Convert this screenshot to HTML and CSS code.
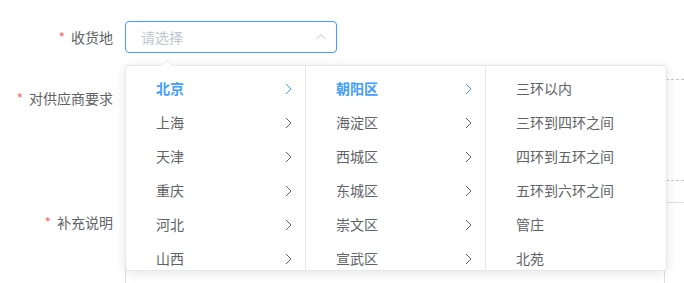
FILE: index.html
```html
<!DOCTYPE html>
<html lang="zh-CN">
<head>
	<meta charset="UTF-8">
	<title>收货地</title>
	<link rel="stylesheet" href="styles.css">
</head>
<body>
	<form class="form">
		<!-- 收货地 -->
		<div class="form-item item-addr">
			<label class="label"><span class="star">*</span>收货地</label>
			<div class="content">
				<div class="cascader">
					<div class="input">
						<span class="placeholder">请选择</span>
						<svg class="caret" width="12" height="12" viewBox="0 0 12 12"><path d="M1.5 8 L6 3.8 L10.5 8" fill="none" stroke="#c0c4cc" stroke-width="1"/></svg>
					</div>

					<!-- 下拉面板 -->
					<div class="dropdown">
						<span class="pointer"></span>
						<div class="panel">
							<ul class="menu">
								<li class="node active">北京<svg class="arrow" viewBox="0 0 7 12"><path d="M1 1 L6 6 L1 11"/></svg></li>
								<li class="node">上海<svg class="arrow" viewBox="0 0 7 12"><path d="M1 1 L6 6 L1 11"/></svg></li>
								<li class="node">天津<svg class="arrow" viewBox="0 0 7 12"><path d="M1 1 L6 6 L1 11"/></svg></li>
								<li class="node">重庆<svg class="arrow" viewBox="0 0 7 12"><path d="M1 1 L6 6 L1 11"/></svg></li>
								<li class="node">河北<svg class="arrow" viewBox="0 0 7 12"><path d="M1 1 L6 6 L1 11"/></svg></li>
								<li class="node">山西<svg class="arrow" viewBox="0 0 7 12"><path d="M1 1 L6 6 L1 11"/></svg></li>
							</ul>
							<ul class="menu">
								<li class="node active">朝阳区<svg class="arrow" viewBox="0 0 7 12"><path d="M1 1 L6 6 L1 11"/></svg></li>
								<li class="node">海淀区<svg class="arrow" viewBox="0 0 7 12"><path d="M1 1 L6 6 L1 11"/></svg></li>
								<li class="node">西城区<svg class="arrow" viewBox="0 0 7 12"><path d="M1 1 L6 6 L1 11"/></svg></li>
								<li class="node">东城区<svg class="arrow" viewBox="0 0 7 12"><path d="M1 1 L6 6 L1 11"/></svg></li>
								<li class="node">崇文区<svg class="arrow" viewBox="0 0 7 12"><path d="M1 1 L6 6 L1 11"/></svg></li>
								<li class="node">宣武区<svg class="arrow" viewBox="0 0 7 12"><path d="M1 1 L6 6 L1 11"/></svg></li>
							</ul>
							<ul class="menu">
								<li class="node">三环以内</li>
								<li class="node">三环到四环之间</li>
								<li class="node">四环到五环之间</li>
								<li class="node">五环到六环之间</li>
								<li class="node">管庄</li>
								<li class="node">北苑</li>
							</ul>
						</div>
					</div>
				</div>
			</div>
		</div>

		<!-- 对供应商要求 -->
		<div class="form-item item-req">
			<label class="label"><span class="star">*</span>对供应商要求</label>
			<div class="content">
				<div class="req-list">
					<div class="req-row first"></div>
					<div class="req-row second"></div>
				</div>
			</div>
		</div>

		<!-- 补充说明 -->
		<div class="form-item item-note">
			<label class="label"><span class="star">*</span>补充说明</label>
			<div class="content">
				<div class="textarea"></div>
			</div>
		</div>
	</form>
</body>
</html>
```

FILE: styles.css
```css
*{
	margin: 0;
	padding: 0;
	box-sizing: border-box;
}
body{
	background-color: #fff;
	font-family: "Noto Sans CJK SC", "Noto Sans", sans-serif;
	font-size: 14px;
	color: #606266;
	overflow: hidden;
}
ul{
	list-style: none;
}

/*表单*/
.form{
	padding-top: 21px;
}
.form-item{
	display: flex;
}
.label{
	width: 125px;
	flex-shrink: 0;
	padding-right: 12px;
	text-align: right;
	color: #606266;
	line-height: 32px;
}
.star{
	color: #f56c6c;
	margin-right: 6px;
}
.content{
	flex: 1;
	position: relative;
}

/*选择框*/
.cascader{
	width: 212px;
	position: relative;
}
.input{
	height: 32px;
	border: 1px solid #409eff;
	border-radius: 4px;
	display: flex;
	align-items: center;
	justify-content: space-between;
	padding: 0 9px 0 15px;
}
.placeholder{
	color: #c0c4cc;
}
.caret{
	display: block;
}

/*下拉面板*/
.dropdown{
	position: absolute;
	top: 44px;
	left: 0;
	z-index: 10;
	background: #fff;
	border: 1px solid #e4e7ed;
	border-radius: 4px;
	box-shadow: 0 2px 12px rgba(0,0,0,.1);
}
.pointer{
	position: absolute;
	top: -6px;
	left: 35px;
	width: 0;
	height: 0;
	border-style: solid;
	border-width: 0 6px 6px;
	border-color: transparent transparent #e4e7ed;
}
.pointer::after{
	content: "";
	position: absolute;
	top: 1px;
	left: -6px;
	border-style: solid;
	border-width: 0 6px 6px;
	border-color: transparent transparent #fff;
}
.panel{
	display: flex;
}
.menu{
	width: 180px;
	height: 204px;
	overflow: hidden;
	padding: 6px 0;
	border-right: 1px solid #e4e7ed;
}
.menu:last-child{
	border-right: none;
}
.node{
	position: relative;
	height: 34px;
	line-height: 33px;
	padding: 0 30px 0 30px;
	color: #606266;
	white-space: nowrap;
}
.node.active{
	color: #409eff;
	font-weight: bold;
}
.arrow{
	position: absolute;
	right: 13px;
	top: 11px;
	width: 7px;
	height: 12px;
	fill: none;
	stroke: #606266;
	stroke-width: 1;
}
.node.active .arrow{
	stroke: #409eff;
}

/*供应商要求*/
.item-req{
	margin-top: 26px;
}
.item-req .label{
	line-height: 38px;
}
.req-list{
	border-bottom: 1px solid #dcdfe6;
}
.req-row{
	border-top: 1px dashed #c0c4cc;
}
.req-row.first{
	height: 101px;
}
.req-row.second{
	height: 22px;
}

/*补充说明*/
.item-note{
	margin-top: 3px;
}
.textarea{
	height: 90px;
	border: 1px solid #dcdfe6;
	border-radius: 4px;
	width: 540px;
}
```
